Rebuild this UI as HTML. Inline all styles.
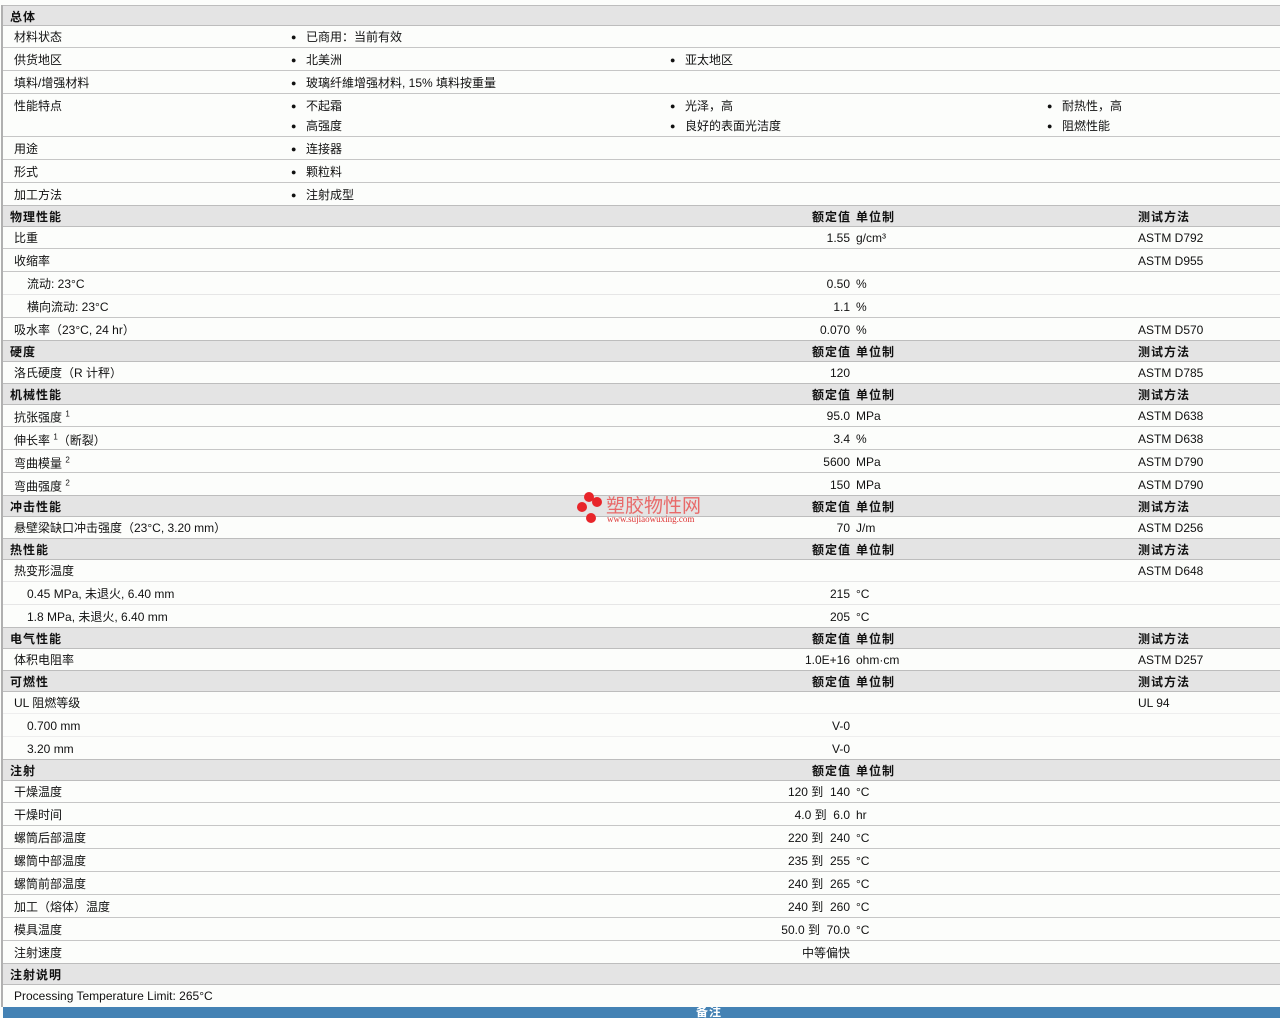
<!DOCTYPE html><html><head><meta charset="utf-8"><style>
body{margin:0;width:1280px;height:1018px;background:#fcfdfb;position:relative;overflow:hidden;font-family:"Liberation Sans","Noto Sans CJK SC",sans-serif;font-size:12px;color:#111}
.r{position:absolute;left:3px;right:0;border-bottom:1px solid #c6c6c6}
.h{background:#e4e4e4;font-weight:bold;border-top:1px solid #bdbdbd;border-bottom:1px solid #bdbdbd}
.h span{letter-spacing:1px}
.r span{position:absolute;top:calc(50% + 1px);transform:translateY(-50%);white-space:nowrap;line-height:14px}
.a{left:11px}.h .a{left:7px}.s{left:24px}
.b1{left:288px}.b2{left:667px}.b3{left:1044px}
.v{right:430px;text-align:right}.h .v{right:429px}.u{left:853px}.t{left:1135px}
i{font-style:normal;font-size:9px;display:inline-block;width:15px;vertical-align:1px}
sup{font-size:8px;vertical-align:5px}
#lb{position:absolute;left:1px;top:5px;width:2px;height:1002px;background:#b0b0b0}
</style></head><body>
<div class="r h" style="top:5px;height:19px"><span class="a">总体</span></div>
<div class="r" style="top:25px;height:22px"><span class="a">材料状态</span><span class="b1"><i>●</i>已商用：当前有效</span></div>
<div class="r" style="top:48px;height:22px"><span class="a">供货地区</span><span class="b1"><i>●</i>北美洲</span><span class="b2"><i>●</i>亚太地区</span></div>
<div class="r" style="top:71px;height:22px"><span class="a">填料/增强材料</span><span class="b1"><i>●</i>玻璃纤維增强材料, 15% 填料按重量</span></div>
<div class="r" style="top:94px;height:42px"><span class="a" style="top:12px">性能特点</span>
<span class="b1" style="top:12px"><i>●</i>不起霜</span><span class="b2" style="top:12px"><i>●</i>光泽，高</span><span class="b3" style="top:12px"><i>●</i>耐热性，高</span>
<span class="b1" style="top:32px"><i>●</i>高强度</span><span class="b2" style="top:32px"><i>●</i>良好的表面光洁度</span><span class="b3" style="top:32px"><i>●</i>阻燃性能</span></div>
<div class="r" style="top:137px;height:22px"><span class="a">用途</span><span class="b1"><i>●</i>连接器</span></div>
<div class="r" style="top:160px;height:22px"><span class="a">形式</span><span class="b1"><i>●</i>颗粒料</span></div>
<div class="r" style="top:183px;height:22px"><span class="a">加工方法</span><span class="b1"><i>●</i>注射成型</span></div>

<div class="r h" style="top:205px;height:20px"><span class="a">物理性能</span><span class="v">额定值</span><span class="u">单位制</span><span class="t">测试方法</span></div>
<div class="r" style="top:226px;height:22px"><span class="a">比重</span><span class="v">1.55</span><span class="u">g/cm³</span><span class="t">ASTM D792</span></div>
<div class="r" style="top:249px;height:22px"><span class="a">收缩率</span><span class="t">ASTM D955</span></div>
<div class="r" style="top:272px;height:22px;border-bottom-color:#e6e6e6"><span class="s">流动: 23°C</span><span class="v">0.50</span><span class="u">%</span></div>
<div class="r" style="top:295px;height:22px"><span class="s">横向流动: 23°C</span><span class="v">1.1</span><span class="u">%</span></div>
<div class="r" style="top:318px;height:22px"><span class="a">吸水率（23°C, 24 hr）</span><span class="v">0.070</span><span class="u">%</span><span class="t">ASTM D570</span></div>

<div class="r h" style="top:340px;height:20px"><span class="a">硬度</span><span class="v">额定值</span><span class="u">单位制</span><span class="t">测试方法</span></div>
<div class="r" style="top:361px;height:22px"><span class="a">洛氏硬度（R 计秤）</span><span class="v">120</span><span class="t">ASTM D785</span></div>

<div class="r h" style="top:383px;height:20px"><span class="a">机械性能</span><span class="v">额定值</span><span class="u">单位制</span><span class="t">测试方法</span></div>
<div class="r" style="top:404px;height:22px"><span class="a">抗张强度 <sup>1</sup></span><span class="v">95.0</span><span class="u">MPa</span><span class="t">ASTM D638</span></div>
<div class="r" style="top:427px;height:22px"><span class="a">伸长率 <sup>1</sup>（断裂）</span><span class="v">3.4</span><span class="u">%</span><span class="t">ASTM D638</span></div>
<div class="r" style="top:450px;height:22px"><span class="a">弯曲模量 <sup>2</sup></span><span class="v">5600</span><span class="u">MPa</span><span class="t">ASTM D790</span></div>
<div class="r" style="top:473px;height:22px"><span class="a">弯曲强度 <sup>2</sup></span><span class="v">150</span><span class="u">MPa</span><span class="t">ASTM D790</span></div>

<div class="r h" style="top:495px;height:20px"><span class="a">冲击性能</span><span class="v">额定值</span><span class="u">单位制</span><span class="t">测试方法</span></div>
<div class="r" style="top:516px;height:22px"><span class="a">悬壁梁缺口冲击强度（23°C, 3.20 mm）</span><span class="v">70</span><span class="u">J/m</span><span class="t">ASTM D256</span></div>

<div class="r h" style="top:538px;height:20px"><span class="a">热性能</span><span class="v">额定值</span><span class="u">单位制</span><span class="t">测试方法</span></div>
<div class="r" style="top:559px;height:22px;border-bottom-color:#e6e6e6"><span class="a">热变形温度</span><span class="t">ASTM D648</span></div>
<div class="r" style="top:582px;height:22px;border-bottom-color:#e6e6e6"><span class="s">0.45 MPa, 未退火, 6.40 mm</span><span class="v">215</span><span class="u">°C</span></div>
<div class="r" style="top:605px;height:22px"><span class="s">1.8 MPa, 未退火, 6.40 mm</span><span class="v">205</span><span class="u">°C</span></div>

<div class="r h" style="top:627px;height:20px"><span class="a">电气性能</span><span class="v">额定值</span><span class="u">单位制</span><span class="t">测试方法</span></div>
<div class="r" style="top:648px;height:22px"><span class="a">体积电阻率</span><span class="v">1.0E+16</span><span class="u">ohm·cm</span><span class="t">ASTM D257</span></div>

<div class="r h" style="top:670px;height:20px"><span class="a">可燃性</span><span class="v">额定值</span><span class="u">单位制</span><span class="t">测试方法</span></div>
<div class="r" style="top:691px;height:22px;border-bottom-color:#eee"><span class="a">UL 阻燃等级</span><span class="t">UL 94</span></div>
<div class="r" style="top:714px;height:22px;border-bottom-color:#eee"><span class="s">0.700 mm</span><span class="v">V-0</span></div>
<div class="r" style="top:737px;height:22px"><span class="s">3.20 mm</span><span class="v">V-0</span></div>

<div class="r h" style="top:759px;height:20px"><span class="a">注射</span><span class="v">额定值</span><span class="u">单位制</span></div>
<div class="r" style="top:780px;height:22px"><span class="a">干燥温度</span><span class="v">120 到 &nbsp;140</span><span class="u">°C</span></div>
<div class="r" style="top:803px;height:22px"><span class="a">干燥时间</span><span class="v">4.0 到 &nbsp;6.0</span><span class="u">hr</span></div>
<div class="r" style="top:826px;height:22px"><span class="a">螺筒后部温度</span><span class="v">220 到 &nbsp;240</span><span class="u">°C</span></div>
<div class="r" style="top:849px;height:22px"><span class="a">螺筒中部温度</span><span class="v">235 到 &nbsp;255</span><span class="u">°C</span></div>
<div class="r" style="top:872px;height:22px"><span class="a">螺筒前部温度</span><span class="v">240 到 &nbsp;265</span><span class="u">°C</span></div>
<div class="r" style="top:895px;height:22px"><span class="a">加工（熔体）温度</span><span class="v">240 到 &nbsp;260</span><span class="u">°C</span></div>
<div class="r" style="top:918px;height:22px"><span class="a">模具温度</span><span class="v">50.0 到 &nbsp;70.0</span><span class="u">°C</span></div>
<div class="r" style="top:941px;height:22px"><span class="v">中等偏快</span><span class="a">注射速度</span></div>

<div class="r h" style="top:963px;height:20px"><span class="a">注射说明</span></div>
<div class="r" style="top:984px;height:22px;border:0"><span class="a">Processing Temperature Limit: 265°C</span></div>
<div style="position:absolute;left:3px;right:0;top:1007px;height:11px;background:#4482b4;color:#fff;font-weight:bold;overflow:hidden"><span style="position:absolute;left:693px;top:-2px;line-height:14px;letter-spacing:1px">备注</span></div>
<div id="lb"></div>

<div style="position:absolute;left:577px;top:492px;width:26px;height:32px">
<div style="position:absolute;left:7px;top:0;width:10px;height:10px;border-radius:50%;background:#e8252a"></div>
<div style="position:absolute;left:15px;top:5px;width:10px;height:10px;border-radius:50%;background:#e8252a"></div>
<div style="position:absolute;left:0;top:10px;width:10px;height:10px;border-radius:50%;background:#e8252a"></div>
<div style="position:absolute;left:9px;top:21px;width:10px;height:10px;border-radius:50%;background:#e8252a"></div>
</div>
<div style="position:absolute;left:606px;top:495px;color:#e86a6a;font-size:19px;line-height:20px;font-family:'Noto Sans CJK SC',sans-serif">塑胶物性网</div>
<div style="position:absolute;left:607px;top:514px;color:#d33;font-size:9px;font-family:'Liberation Serif',serif">www.sujiaowuxing.com</div>
</body></html>
